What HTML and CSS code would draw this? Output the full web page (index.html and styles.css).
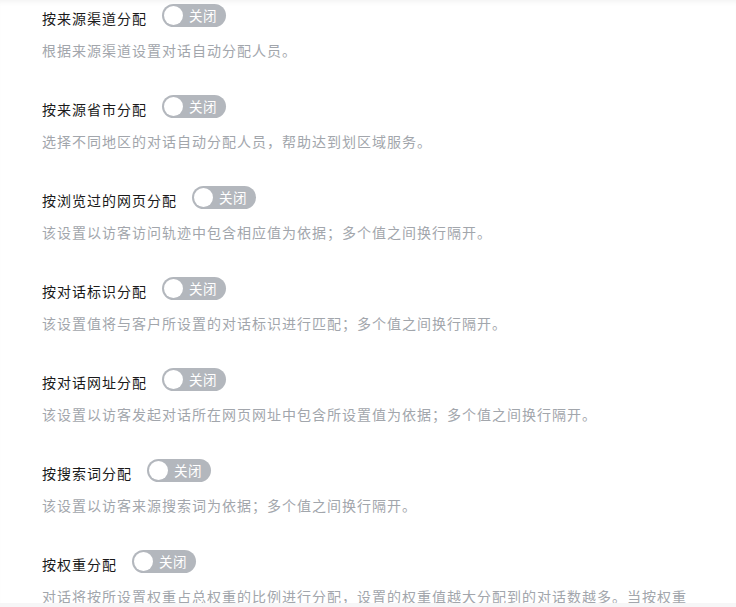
FILE: index.html
```html
<!DOCTYPE html>
<html lang="zh-CN">
<head>
<meta charset="utf-8">
<title>分配设置</title>
<link rel="stylesheet" href="styles.css">
</head>
<body>
<div class="panel">
  <div class="item">
    <div class="row"><span class="label">按来源渠道分配</span><span class="switch"><span class="knob"></span><span class="switch-text">关闭</span></span></div>
    <p class="desc">根据来源渠道设置对话自动分配人员。</p>
  </div>
  <div class="item">
    <div class="row"><span class="label">按来源省市分配</span><span class="switch"><span class="knob"></span><span class="switch-text">关闭</span></span></div>
    <p class="desc">选择不同地区的对话自动分配人员，帮助达到划区域服务。</p>
  </div>
  <div class="item">
    <div class="row"><span class="label">按浏览过的网页分配</span><span class="switch"><span class="knob"></span><span class="switch-text">关闭</span></span></div>
    <p class="desc">该设置以访客访问轨迹中包含相应值为依据；多个值之间换行隔开。</p>
  </div>
  <div class="item">
    <div class="row"><span class="label">按对话标识分配</span><span class="switch"><span class="knob"></span><span class="switch-text">关闭</span></span></div>
    <p class="desc">该设置值将与客户所设置的对话标识进行匹配；多个值之间换行隔开。</p>
  </div>
  <div class="item">
    <div class="row"><span class="label">按对话网址分配</span><span class="switch"><span class="knob"></span><span class="switch-text">关闭</span></span></div>
    <p class="desc">该设置以访客发起对话所在网页网址中包含所设置值为依据；多个值之间换行隔开。</p>
  </div>
  <div class="item">
    <div class="row"><span class="label">按搜索词分配</span><span class="switch"><span class="knob"></span><span class="switch-text">关闭</span></span></div>
    <p class="desc">该设置以访客来源搜索词为依据；多个值之间换行隔开。</p>
  </div>
  <div class="item">
    <div class="row"><span class="label">按权重分配</span><span class="switch"><span class="knob"></span><span class="switch-text">关闭</span></span></div>
    <p class="desc">对话将按所设置权重占总权重的比例进行分配，设置的权重值越大分配到的对话数越多。当按权重分配开启时，其他分配方式将不再生效。</p>
  </div>
</div>
</body>
</html>
```

FILE: styles.css
```css
html, body {
  margin: 0;
  padding: 0;
}
body {
  background: #f6f6f7;
  font-family: "Noto Sans CJK SC", "Noto Sans", sans-serif;
  width: 736px;
  height: 607px;
  overflow: hidden;
}
.panel {
  background: #ffffff;
  height: 603px;
  overflow: hidden;
  padding: 0 44px 0 42px;
  box-sizing: border-box;
  box-shadow: inset 0 5px 5px -3px rgba(0, 0, 0, 0.05);
}
.item {
  padding: 4px 0 31px;
}
.row {
  display: flex;
  align-items: flex-start;
  height: 26px;
}
.label {
  margin-top: 3px;
  line-height: 23px;
  font-size: 14px;
  letter-spacing: 1px;
  color: #1a1a1a;
  margin-right: 15px;
  white-space: nowrap;
}
.switch {
  display: flex;
  align-items: center;
  width: 64px;
  height: 23px;
  border-radius: 12px;
  background: #b3b7bd;
  box-sizing: border-box;
  padding-left: 2px;
}
.knob {
  width: 19px;
  height: 19px;
  border-radius: 50%;
  background: #ffffff;
  flex: none;
}
.switch-text {
  margin-left: 6px;
  color: #ffffff;
  font-size: 13.5px;
  letter-spacing: 0.5px;
  line-height: 23px;
}
.desc {
  margin: 10px 0 0;
  font-size: 14px;
  letter-spacing: 1px;
  line-height: 20px;
  color: #a2a6ac;
}
```
